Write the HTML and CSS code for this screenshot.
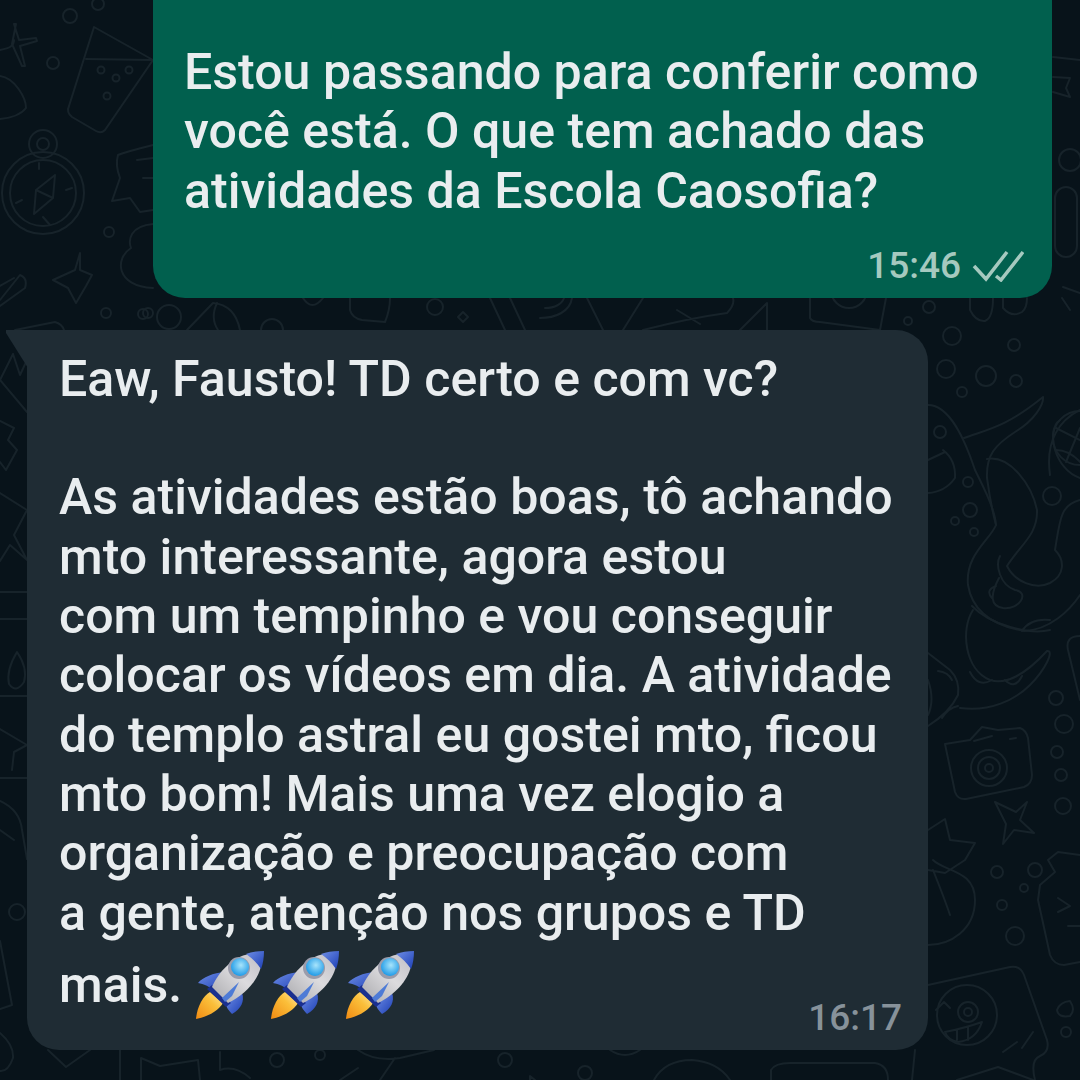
FILE: index.html
```html
<!DOCTYPE html>
<html>
<head>
  <link rel="stylesheet" href="styles.css">
</head>
<body>
  <svg class="doodles" width="1080" height="1080" viewBox="0 0 1080 1080" fill="none">
    <!-- top left -->
    <path d="M0 50C10 48 14 46 14 40M16 24L12 44 22 66 25 66 20 46 37 41 36 38 19 40 14 24Z"/>
    <path d="M0 76C15 78 26 98 26 108 20 116 10 118 0 119"/>
    <circle cx="53" cy="63" r="6"/><circle cx="70" cy="16" r="7"/><circle cx="98" cy="4" r="6"/>
    <path d="M94 27L153 60 105 130Q101 134 96 131L72 117Q66 112 69 106ZM86 59L153 60"/>
    <circle cx="101" cy="70" r="3.500"/><circle cx="116" cy="78" r="3.500"/><circle cx="129" cy="70" r="3.500"/><circle cx="107" cy="96" r="3.500"/>
    <circle cx="43" cy="193" r="41"/><circle cx="43" cy="193" r="33"/><circle cx="43" cy="144" r="14"/><circle cx="43" cy="144" r="6"/>
    <path d="M55 175L36 190 34 214 53 198ZM36 190L53 198M39 163V169M43 217L50 225M16 203L22 200M66 190L72 188"/>
    <path d="M80 253L75 270 53 280 68 288 76 303 86 286 92 275 80 270ZM80 253"/>
    <path d="M153 145Q125 152 118 155 115 165 120 178L112 201 130 198 140 212 153 210M137 160L153 158M143 178H153"/>
    <circle cx="109" cy="232" r="5"/><circle cx="148" cy="313" r="5"/>
    <path d="M153 224C130 226 128 240 131 248 115 258 115 286 153 288"/>
    <path d="M0 300L20 275Q28 278 25 288L0 306M0 286L14 278"/>

    <!-- between bubbles -->
    <path d="M15 330Q40 325 55 322 62 324 64 330"/>
    <circle cx="106" cy="313" r="5"/><circle cx="143" cy="314" r="5"/><circle cx="169" cy="317" r="12"/>
    <path d="M187 330L213 303Q235 305 240 330M217 303Q210 318 218 330"/>
    <circle cx="272" cy="330" r="11"/>
    <path d="M303 298Q312 312 323 298M350 298V310Q352 318 362 320L385 322Q390 310 390 298"/>
    <circle cx="435" cy="307" r="8"/><path d="M463 312L468 317 463 322 458 317Z"/>
    <path d="M490 298L505 330M510 298L525 330M540 318C555 318 570 312 572 298M545 308C555 308 562 304 564 298"/>
    <path d="M587 298L603 330M643 298L623 330M643 330Q690 318 727 313 735 305 733 298M677 310L700 324M740 330L767 303V330"/>
    <path d="M810 298V318Q812 322 820 322L880 330 886 298"/><circle cx="849" cy="290" r="18"/>
    <circle cx="929" cy="307" r="6"/><circle cx="908" cy="321" r="4"/><circle cx="952" cy="336" r="9"/><circle cx="1014" cy="345" r="6"/>
    <path d="M970 298V310Q976 322 985 321 993 318 993 298M1003 298V308Q1012 318 1022 312 1027 308 1027 298"/>
    <path d="M1063 287L1080 293M1062 298L1070 310"/>

    <!-- right column -->
    <circle cx="946" cy="369" r="9"/><circle cx="986" cy="376" r="10"/><circle cx="962" cy="392" r="5"/><circle cx="1016" cy="381" r="6"/>
    <path d="M928 405C950 405 965 440 975 470 985 490 995 510 996 525 990 540 965 555 968 585 972 610 990 625 1024 631 1050 630 1070 610 1080 595"/>
    <path d="M943 450Q956 460 955 478 945 492 928 493M928 460L945 452"/>
    <circle cx="940" cy="432" r="6"/><circle cx="968" cy="482" r="5"/><circle cx="970" cy="510" r="7"/><circle cx="955" cy="521" r="4"/><circle cx="974" cy="532" r="4"/>
    <path d="M964 438C985 430 1005 428 1043 397 1044 404 1035 420 1015 432 995 445 986 455 987 478 990 500 992 510 996 525"/>
    <path d="M987 459C1010 455 1032 485 1037 510 1038 535 1020 545 1007 566 1015 582 1035 590 1050 583 1065 575 1065 560 1055 550 1060 520 1060 505 1080 500"/>
    <path d="M1000 556C995 565 1000 585 1015 590 1030 592 1020 610 1003 608 990 606 990 595 999 578M996 586Q985 590 992 598"/>
    <path d="M972 606C990 625 1030 635 1050 630M1022 631Q1030 618 1050 620"/>
    <path d="M973 610C960 630 965 670 990 680 1005 685 1025 675 1047 651 1055 650 1045 670 1030 685 1015 700 990 712 960 708"/>
    <path d="M970 672Q978 688 992 680M1005 680Q1015 690 1022 676"/>
    <path d="M1060 420C1045 430 1055 470 1080 478M1080 410C1060 420 1045 440 1050 475"/>
    <circle cx="1080" cy="438" r="27"/><path d="M1056 428L1080 440M1056 450Q1070 450 1082 464M1066 462L1080 428"/>
    <circle cx="1052" cy="496" r="9"/>
    <path d="M928 653L950 670Q960 680 958 695 950 712 928 726M928 680Q935 700 928 715M938 671Q948 672 952 680M942 718Q948 708 958 706"/>
    <circle cx="1056" cy="698" r="7"/><circle cx="1064" cy="724" r="9"/><circle cx="1057" cy="752" r="6"/><circle cx="1061" cy="775" r="6"/><circle cx="1063" cy="806" r="8"/>
    <path d="M1080 636Q1065 636 1068 650L1080 700"/>

    <path d="M945 744L970 740 982 727 998 730 1020 728Q1026 730 1028 738L1032 775Q1032 784 1024 787L966 799Q958 800 955 792Z"/>
    <circle cx="989" cy="768" r="18"/><circle cx="989" cy="768" r="11"/><circle cx="989" cy="768" r="4"/>
    <path d="M974 741L992 736M1010 739L1016 738"/>
    <path d="M995 802L1016 812 1027 802 1020 820 1034 833 1014 830 1003 844 1006 824Z"/>

    <path d="M928 830L945 819 950 840 975 843 965 860 945 873 928 870M933 860C945 872 975 870 975 900 975 930 950 945 928 945M933 870Q945 900 950 915"/>
    <circle cx="997" cy="872" r="6"/><circle cx="1035" cy="870" r="7"/><circle cx="1024" cy="888" r="4"/><circle cx="1002" cy="905" r="5"/><circle cx="1015" cy="936" r="9"/>
    <path d="M1080 855L1058 852 1048 860 1055 872 1040 885 1038 900 1050 955Q1054 965 1064 965L1080 962"/>
    <path d="M1058 898L1070 906 1058 912M1068 926H1080"/>
    <path d="M928 985L1010 967Q1020 965 1024 975L1047 1040Q1050 1052 1040 1056 1030 1060 1035 1080"/>
    <circle cx="967" cy="1015" r="30"/><circle cx="968" cy="1012" r="10"/><circle cx="968" cy="1012" r="4"/>
    <path d="M936 1010L944 1002 950 1008M945 1032Q965 1028 982 1022 976 1040 958 1042 948 1040 945 1032ZM957 1030V1040M968 1027V1040"/>
    <path d="M1003 1052L1017 1042M1022 1048L1033 1032"/>
    <path d="M1070 1001Q1076 1010 1070 1016 1058 1018 1057 1010 1060 1002 1070 1001Z"/><circle cx="1066" cy="1032" r="5"/>

    <!-- bottom strip -->
    <path d="M48 1050L66 1067 90 1050M120 1050V1080M141 1080V1058L160 1066 198 1060 200 1080M220 1052V1070Q235 1065 250 1078M358 1050Q375 1062 400 1058L434 1050M395 1058L380 1080M340 1080L358 1068"/>
    <circle cx="277" cy="1060" r="7"/><circle cx="320" cy="1055" r="5"/><circle cx="505" cy="1060" r="7"/><circle cx="585" cy="1073" r="7"/>
    <path d="M530 1080V1076L535 1080M610 1050Q625 1060 640 1050M654 1080Q665 1060 692 1060 718 1062 730 1080M771 1080V1070Q775 1063 790 1063H875Q888 1065 888 1080M915 1050L912 1080M957 1080L998 1067 1033 1080"/>

    <!-- far right top -->
    <path d="M1053 57L1080 60M1053 77L1070 78 1066 88 1070 97 1053 92"/>
    <circle cx="1070" cy="160" r="11"/>
    <rect x="1055" y="187" width="22" height="70" rx="11"/>

    <!-- left edge -->
    <path d="M13 354L20 375 27 360M13 354L0 380 27 412M0 421L14 428 8 440 17 450 6 470 0 462M0 493L27 510 14 535 27 560 10 545 0 561M0 592H27M0 619H27M0 696H27M0 729L27 745 14 752 12 770M0 778H27M0 801Q20 810 22 830L27 859M0 830L14 840"/>
    <path d="M17 652Q28 668 24 682 16 694 9 684 6 670 17 652Z"/>
    <ellipse cx="17" cy="912" rx="8" ry="8"/>
    <path d="M0 941L12 1005 0 1009M0 1033Q14 1045 13 1058 8 1072 0 1071"/>
  </svg>

  <main class="chat">
    <section class="bubble bubble-out">
      <p class="message">Estou passando para conferir como<br>você está. O que tem achado das<br>atividades da Escola Caosofia?</p>
      <div class="meta">
        <span class="time">15:46</span>
        <svg class="ticks" width="52" height="32" viewBox="0 0 52 32" fill="none">
          <path d="M2 16L14 29 35 2M24 26L29 30 51 2"/>
        </svg>
      </div>
    </section>

    <section class="bubble bubble-in">
      <p class="message">Eaw, Fausto! TD certo e com vc?<br><br>As atividades estão boas, tô achando<br>mto interessante, agora estou<br>com um tempinho e vou conseguir<br>colocar os vídeos em dia. A atividade<br>do templo astral eu gostei mto, ficou<br>mto bom! Mais uma vez elogio a<br>organização e preocupação com<br>a gente, atenção nos grupos e TD<br>mais.<span class="rockets"><svg class="rocket" viewBox="0 0 70 70"><use href="#rocket"/></svg><svg class="rocket" viewBox="0 0 70 70"><use href="#rocket"/></svg><svg class="rocket" viewBox="0 0 70 70"><use href="#rocket"/></svg></span></p>
      <span class="time time-in">16:17</span>
    </section>
  </main>

  <svg class="defs" width="0" height="0">
    <defs>
      <linearGradient id="flame" x1="0" y1="1" x2="1" y2="0">
        <stop offset="0" stop-color="#f08a12"/><stop offset="0.6" stop-color="#fbbf3a"/><stop offset="1" stop-color="#fde9a8"/>
      </linearGradient>
      <linearGradient id="hull" x1="0" y1="1" x2="1" y2="0">
        <stop offset="0" stop-color="#a8a8ac"/><stop offset="0.55" stop-color="#dcdbde"/><stop offset="1" stop-color="#c0bfc6"/>
      </linearGradient>
      <linearGradient id="fin" x1="0" y1="0" x2="1" y2="1">
        <stop offset="0" stop-color="#6f8fe6"/><stop offset="1" stop-color="#1d3fb5"/>
      </linearGradient>
      <radialGradient id="glass" cx="0.55" cy="0.4" r="0.6">
        <stop offset="0" stop-color="#a8e4fb"/><stop offset="1" stop-color="#1f9be8"/>
      </radialGradient>
      <symbol id="rocket" viewBox="0 0 70 70">
        <path fill="url(#flame)" d="M1 68C2 56 8 45 15 41L28 52C24 59 13 66 1 68Z"/>
        <path fill="url(#fin)" d="M3 32C8 26 18 22 30 21L18 40C14 35 9 33 3 32Z"/>
        <path fill="url(#fin)" d="M37 63C31 57 30 53 32 49L47 42C50 50 46 58 37 63Z"/>
        <path fill="#1a2f8f" d="M12 38L17 34 36 52 31 56Z"/>
        <path fill="url(#hull)" d="M17 36C24 20 38 6 54 3L66 15C63 30 49 44 33 52Z"/>
        <path fill="url(#fin)" d="M51 3C56 1 63 0 69 0 69 6 68 13 66 18 62 12 57 7 51 3Z"/>
        <path fill="#4e7bd6" d="M27 47L44 31 37 45 30 51Z"/>
        <circle cx="44" cy="17" r="11" fill="#9a9cab"/>
        <circle cx="45" cy="16" r="9" fill="url(#glass)"/>
      </symbol>
    </defs>
  </svg>
</body>
</html>
```
FILE: styles.css
```css
body {
  margin: 0;
  height: 1080px;
  overflow: hidden;
  position: relative;
  background-color: #08131a;
  font-family: Roboto, "Liberation Sans", sans-serif;
  color: #e9edef;
}

/* wallpaper, sits under the bubbles */
.doodles {
  position: absolute;
  top: 0;
  left: 0;
  stroke: #17232a;
  stroke-width: 2;
  stroke-linecap: round;
  stroke-linejoin: round;
}

.defs {
  position: absolute;
}

.chat {
  position: relative;
  display: flex;
  flex-direction: column;
  gap: 32px;
}

.bubble {
  position: relative;
  box-sizing: border-box;
}

.bubble-out {
  margin-left: 153px;
  width: 899px;
  padding: 43px 28px 11px 31px;
  background-color: #01604e;
  border-radius: 0 0 32px 32px;
}

.bubble-in {
  margin-left: 27px;
  width: 901px;
  height: 720px;
  padding: 20px 30px 0 32px;
  background-color: #1f2c34;
  border-radius: 0 32px 32px 32px;
}

/* little tail on the top left corner */
.bubble-in::before {
  content: "";
  position: absolute;
  top: 0;
  left: -21px;
  width: 22px;
  height: 38px;
  background-color: #1f2c34;
  clip-path: polygon(0 0, 100% 0, 100% 100%, 0 3px);
}

.message {
  margin: 0;
  font-size: 50.1px;
  font-weight: 500;
  line-height: 59.3px;
}

.meta {
  display: flex;
  justify-content: flex-end;
  align-items: center;
  gap: 11px;
  margin-top: 24px;
  height: 42px;
}

.time {
  font-size: 37px;
  font-weight: 500;
  line-height: 42px;
  color: #a5c9bf;
}

.ticks {
  stroke: #a5c9bf;
  stroke-width: 3.500;
}

.time-in {
  position: absolute;
  right: 26px;
  bottom: 11px;
  color: #87929a;
}

.rockets {
  display: inline-flex;
  gap: 5px;
  margin-left: 13px;
  margin-top: 8px;
  vertical-align: -19px;
}

.rocket {
  width: 70px;
  height: 70px;
}
```
